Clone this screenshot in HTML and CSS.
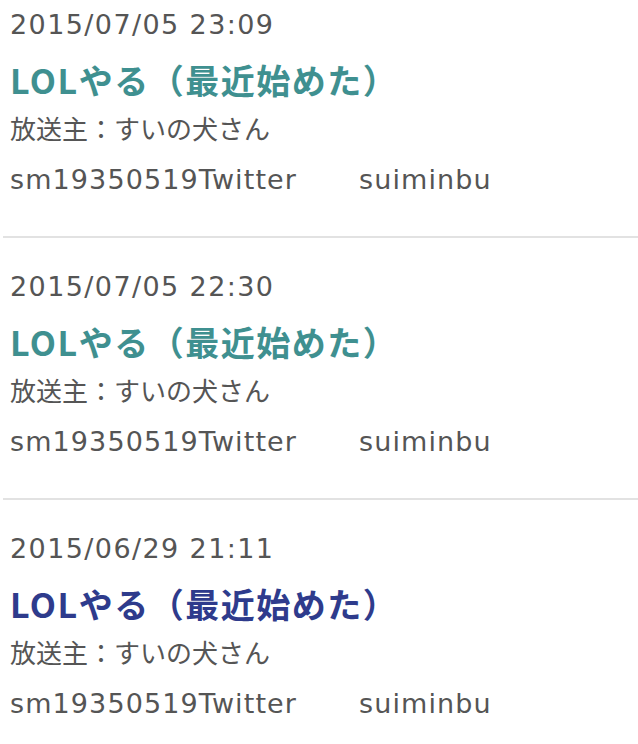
FILE: index.html
```html
<!DOCTYPE html>
<html lang="ja">
<head>
<meta charset="utf-8">
<title>放送一覧</title>
<link rel="stylesheet" href="styles.css">
</head>
<body>
<ul class="list">
  <li class="item">
    <div class="date">2015/07/05 23:09</div>
    <a class="title" href="#">LOLやる（最近始めた）</a>
    <div class="owner">放送主：すいの犬さん</div>
    <div class="meta"><span class="id">sm19350519</span><span class="tw">Twitter</span><span class="user">suiminbu</span></div>
  </li>
  <li class="item">
    <div class="date">2015/07/05 22:30</div>
    <a class="title" href="#">LOLやる（最近始めた）</a>
    <div class="owner">放送主：すいの犬さん</div>
    <div class="meta"><span class="id">sm19350519</span><span class="tw">Twitter</span><span class="user">suiminbu</span></div>
  </li>
  <li class="item">
    <div class="date">2015/06/29 21:11</div>
    <a class="title visited" href="#">LOLやる（最近始めた）</a>
    <div class="owner">放送主：すいの犬さん</div>
    <div class="meta"><span class="id">sm19350519</span><span class="tw">Twitter</span><span class="user">suiminbu</span></div>
  </li>
</ul>
</body>
</html>
```
FILE: styles.css
```css
html, body {
  margin: 0;
  padding: 0;
  background: #ffffff;
}
body {
  font-family: "DejaVu Sans", "Noto Sans CJK JP", sans-serif;
  color: #555555;
  overflow: hidden;
}
.list {
  list-style: none;
  margin: 0 0 0 3px;
  padding: 0;
}
.item {
  padding: 24px 0 22px 7px;
  border-bottom: 2px solid #e2e2e2;
}
.item:first-child {
  padding-top: 0;
}
.date {
  font-size: 27px;
  letter-spacing: 1.4px;
  line-height: 50px;
  height: 50px;
  white-space: nowrap;
}
.title {
  display: block;
  font-family: "Noto Sans CJK JP", sans-serif;
  font-weight: bold;
  font-size: 34px;
  letter-spacing: 1.5px;
  line-height: 60px;
  height: 60px;
  color: #3f9090;
  text-decoration: none;
  white-space: nowrap;
}
.title.visited {
  color: #2e3b8c;
}
.owner {
  font-family: "Noto Sans CJK JP", sans-serif;
  font-size: 26px;
  line-height: 36px;
  height: 36px;
  white-space: nowrap;
}
.meta {
  font-size: 27px;
  letter-spacing: 1.1px;
  line-height: 68px;
  height: 68px;
  white-space: nowrap;
}
.user {
  margin-left: 62px;
}
```
